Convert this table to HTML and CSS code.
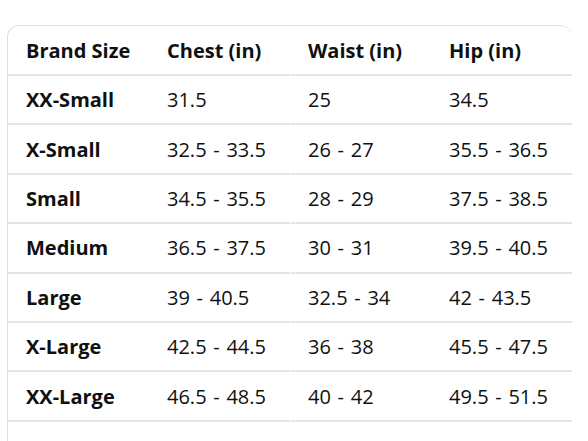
FILE: index.html
```html
<!DOCTYPE html>
<html>
<head>
<meta charset="utf-8">
<link rel="stylesheet" href="styles.css">
</head>
<body>
<div class="wrap">
  <table class="sizes">
    <thead>
      <tr><th>Brand Size</th><th>Chest (in)</th><th class="gap">Waist (in)</th><th>Hip (in)</th></tr>
    </thead>
    <tbody>
      <tr><th>XX-Small</th><td>31.5</td><td class="gap">25</td><td>34.5</td></tr>
      <tr><th>X-Small</th><td>32.5 - 33.5</td><td class="gap">26 - 27</td><td>35.5 - 36.5</td></tr>
      <tr><th>Small</th><td>34.5 - 35.5</td><td class="gap">28 - 29</td><td>37.5 - 38.5</td></tr>
      <tr><th>Medium</th><td>36.5 - 37.5</td><td class="gap">30 - 31</td><td>39.5 - 40.5</td></tr>
      <tr><th>Large</th><td>39 - 40.5</td><td class="gap">32.5 - 34</td><td>42 - 43.5</td></tr>
      <tr><th>X-Large</th><td>42.5 - 44.5</td><td class="gap">36 - 38</td><td>45.5 - 47.5</td></tr>
      <tr><th>XX-Large</th><td>46.5 - 48.5</td><td class="gap">40 - 42</td><td>49.5 - 51.5</td></tr>
      <tr class="last"><th></th><td></td><td class="gap"></td><td></td></tr>
    </tbody>
  </table>
</div>
</body>
</html>
```
FILE: styles.css
```css
html, body {
  margin: 0;
  padding: 0;
  background: #ffffff;
  overflow: hidden;
}
.wrap {
  padding: 25px 0 0 7px;
  width: 566px;
  height: 416px;
  overflow: hidden;
}
.sizes {
  width: 565px;
  border-collapse: separate;
  border-spacing: 0;
  border-top: 1.5px solid #dcdfdf;
  border-left: 1.5px solid #dcdfdf;
  border-right: 0;
  border-top-left-radius: 12px;
  border-top-right-radius: 12px;
  table-layout: fixed;
  font-family: "Open Sans", "Noto Sans", sans-serif;
  font-size: 20px;
  color: #0f1111;
}
.sizes th, .sizes td {
  text-align: left;
  height: 47.4px;
  padding: 0 0 0 18px;
  border-bottom: 2px solid #e3e6e6;
  vertical-align: middle;
  white-space: nowrap;
}
.sizes th {
  font-weight: 700;
}
.sizes td {
  font-weight: 400;
  word-spacing: 1.5px;
}
.sizes thead th {
  height: 48px;
}
.sizes .gap {
  border-left: 2px solid #ffffff;
  padding-left: 16px;
}
.sizes .last th, .sizes .last td {
  border-bottom: 0;
}
```
